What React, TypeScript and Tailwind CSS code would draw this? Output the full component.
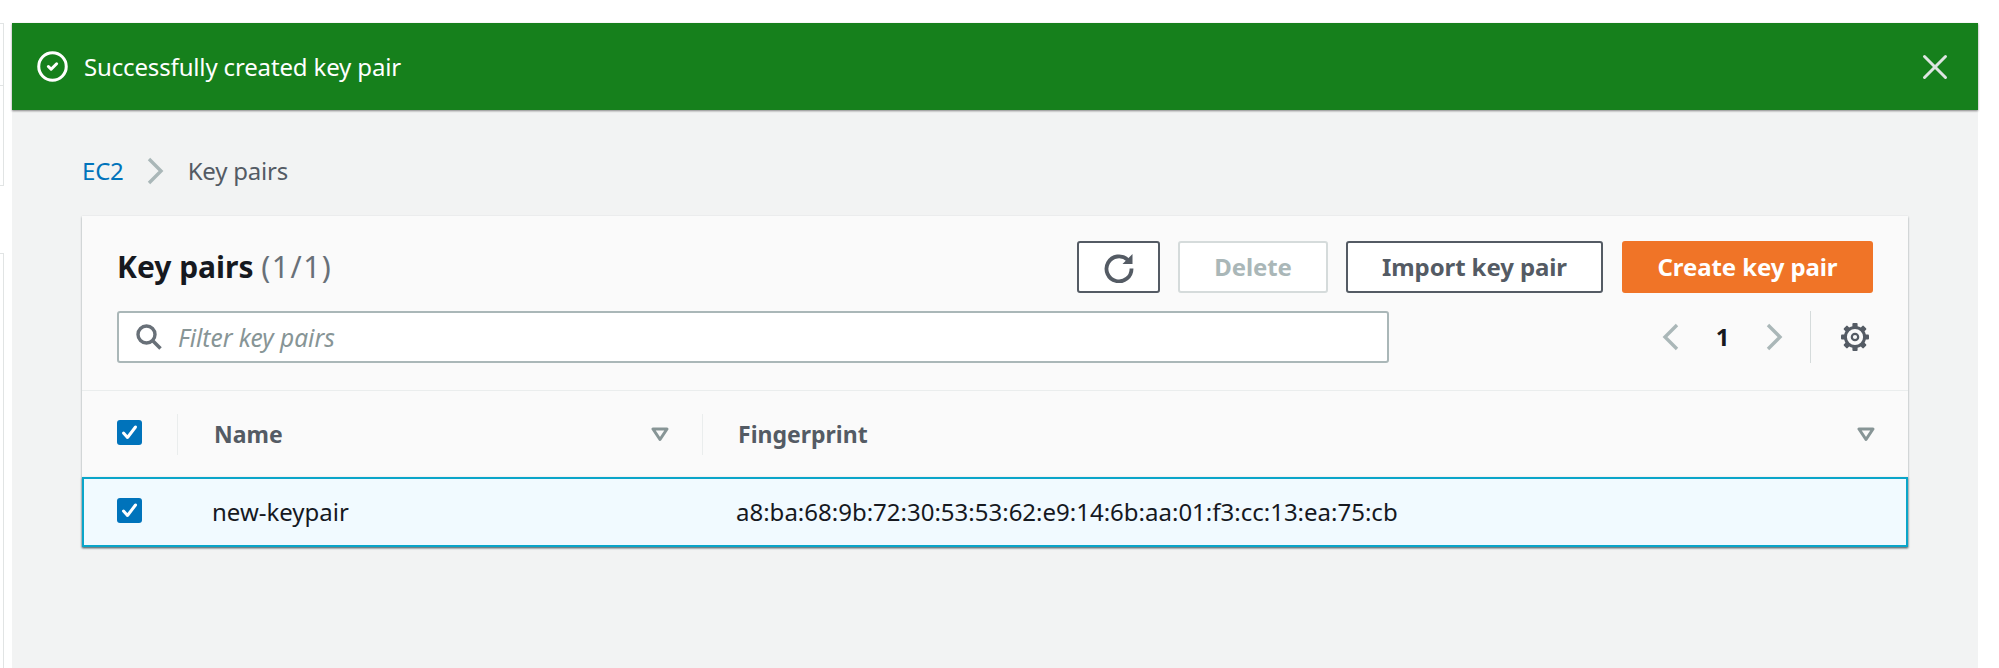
import React from 'react';
import { CircleCheck, X } from 'lucide-react';

const Checkbox = () => (
  <div className="w-[25px] h-[25px] rounded-[3px] bg-[#0073bb] flex items-center justify-center">
    <svg width="19" height="19" viewBox="0 0 19 19" fill="none">
      <path d="M3.5 10l4 4.5 8-10.5" stroke="white" strokeWidth="3" strokeLinecap="round" strokeLinejoin="round" />
    </svg>
  </div>
);

const SortIcon = () => (
  <svg width="18" height="15" viewBox="0 0 18 15" fill="none">
    <path d="M2 2h14l-7 10.5z" stroke="#879596" strokeWidth="3" strokeLinejoin="round" />
  </svg>
);

const Chevron = ({ left = false, color = '#aab7b8' }: { left?: boolean; color?: string }) => (
  <svg width="17" height="28" viewBox="0 0 17 28" fill="none">
    <path d={left ? 'M15 2L3 14l12 12' : 'M2 2l12 12L2 26'} stroke={color} strokeWidth="3.4" />
  </svg>
);

const GearIcon = () => (
  <svg width="32" height="32" viewBox="0 0 32 32" fill="none" className="ml-[28px]">
    <circle cx="16" cy="16" r="9.6" stroke="#545b64" strokeWidth="3" />
    <circle cx="16" cy="16" r="3.2" stroke="#545b64" strokeWidth="2.2" />
    {[0, 45, 90, 135, 180, 225, 270, 315].map(deg => (
      <rect key={deg} x="13.4" y="2" width="5.2" height="4.5" rx="1" fill="#545b64" transform={`rotate(${deg} 16 16)`} />
    ))}
  </svg>
);

const App: React.FC = () => {
  return (
    <div className="flex w-full h-[668px] overflow-hidden bg-white text-[#16191f] font-['Noto_Sans',sans-serif]">
      <div className="w-[12px] pt-[23px] shrink-0">
        <div className="w-[4px] h-[163px] border-t border-r border-b border-[#e1e4e4] pt-[61px]">
          <div className="border-t border-[#e1e4e4]" />
        </div>
        <div className="w-[4px] h-[415px] mt-[67px] border-t border-r border-[#e1e4e4]" />
      </div>

      <div className="w-[1966px] mt-[23px] bg-[#f2f3f3] shrink-0">
        <div className="h-[87px] bg-[#16801c] shadow-[0_1px_2px_rgba(0,0,0,0.45)] flex items-center justify-between pl-[24px] pr-[22px] text-white">
          <div className="flex items-center gap-[15px]">
            <CircleCheck size={33} strokeWidth={2.2} />
            <span className="text-[24px] tracking-[-0.15px]">Successfully created key pair</span>
          </div>
          <X size={42} strokeWidth={1.7} className="text-[#dfe5e2]" />
        </div>

        <div className="px-[70px]">
          <nav className="h-[106px] pt-[45px] flex items-start">
            <div className="flex items-center h-[32px] text-[24px] tracking-[-0.2px]">
              <span className="text-[#0073bb]">EC2</span>
              <span className="ml-[23px] mr-[24px]"><Chevron /></span>
              <span className="text-[#545b64]">Key pairs</span>
            </div>
          </nav>

          <section className="bg-[#fafafa] shadow-[0_1px_2px_rgba(0,28,36,0.4)]">
            <div className="pt-[25px] pl-[35px] pr-[35px] pb-[27px] border-b border-[#eaeded]">
              <div className="flex items-center justify-between h-[52px]">
                <h1 className="text-[30px] font-bold leading-none">
                  Key pairs <span className="font-normal text-[#687078] tracking-[1.5px]">(1/1)</span>
                </h1>
                <div className="flex gap-[18px] text-[24px] font-bold tracking-[-0.1px]">
                  <button className="w-[83px] h-[52px] rounded-[3px] border-2 border-[#545b64] bg-white flex items-center justify-center">
                    <svg width="32" height="32" viewBox="0 0 32 32" fill="none">
                      <path d="M24.8 9A12.5 12.5 0 1 0 28.5 17.5" stroke="#545b64" strokeWidth="3.8" />
                      <path d="M29.5 3v10h-10z" fill="#545b64" />
                    </svg>
                  </button>
                  <button className="w-[150px] h-[52px] rounded-[3px] border-2 border-[#d5dbdb] bg-white text-[#aab7b8]">
                    Delete
                  </button>
                  <button className="w-[257px] h-[52px] rounded-[3px] border-2 border-[#545b64] bg-white text-[#545b64]">
                    Import key pair
                  </button>
                  <button className="w-[251px] h-[52px] ml-[1px] rounded-[3px] bg-[#f07427] text-white">
                    Create key pair
                  </button>
                </div>
              </div>

              <div className="flex items-center h-[52px] mt-[18px]">
                <div className="w-[1272px] h-[52px] rounded-[3px] border-2 border-[#aab7b8] bg-white flex items-center pl-[16px]">
                  <svg width="28" height="28" viewBox="0 0 28 28" fill="none">
                    <circle cx="11.5" cy="11.5" r="8.5" stroke="#687078" strokeWidth="3.4" />
                    <path d="M18 18l7.5 7.5" stroke="#687078" strokeWidth="3.6" />
                  </svg>
                  <span className="ml-[15px] pt-[3px] text-[24.5px] italic text-[#879596]">Filter key pairs</span>
                </div>
                <div className="ml-[273px] flex items-center h-[52px]">
                  <Chevron left />
                  <span className="w-[87px] text-center text-[24px] font-bold">1</span>
                  <Chevron />
                  <div className="ml-[27px] h-[52px] border-l border-[#d5dbdb]" />
                  <GearIcon />
                </div>
              </div>
            </div>

            <div className="grid grid-cols-[95px_525px_1fr] h-[86px] items-center text-[#545b64] text-[23px] font-bold">
              <div className="pl-[35px] h-[41px] flex items-center pb-[4px]">
                <Checkbox />
              </div>
              <div className="h-[41px] border-l border-[#eaeded] pl-[36px] pr-[33px] flex items-center justify-between">
                <span>Name</span>
                <SortIcon />
              </div>
              <div className="h-[41px] border-l border-[#eaeded] pl-[35px] pr-[33px] flex items-center justify-between">
                <span>Fingerprint</span>
                <SortIcon />
              </div>
            </div>

            <div className="grid grid-cols-[93px_525px_1fr] h-[70px] items-center border-2 border-[#0aa5c9] bg-[#f1faff] shadow-[0_1px_2px_rgba(0,28,36,0.5)] text-[24px]">
              <div className="pl-[33px] pb-[3px]">
                <Checkbox />
              </div>
              <div className="pl-[35px]">new-keypair</div>
              <div className="pl-[34px]">a8:ba:68:9b:72:30:53:53:62:e9:14:6b:aa:01:f3:cc:13:ea:75:cb</div>
            </div>
          </section>
        </div>
      </div>
    </div>
  );
};

export default App;
